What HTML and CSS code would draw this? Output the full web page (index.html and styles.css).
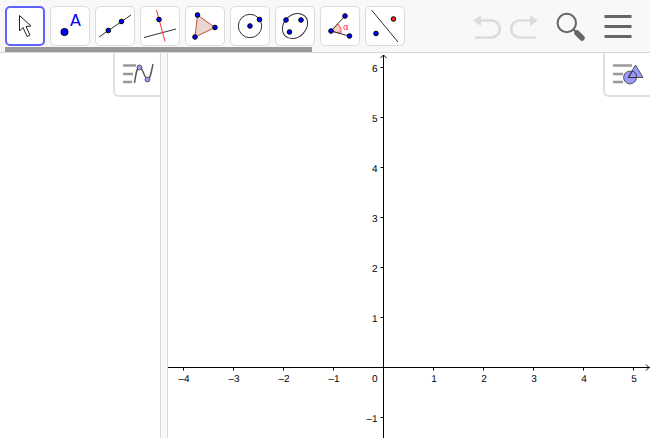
FILE: index.html
```html
<!DOCTYPE html>
<html lang="en">

<head>
    <meta charset="UTF-8">
    <meta name="viewport" content="width=device-width, initial-scale=1.0">
    <title>Graphing</title>
    <link rel="stylesheet" href="styles.css">
</head>

<body>

    <header class="toolbar">
        <div class="tools">
            <div class="tool-row">
                <button type="button" class="tool selected" aria-label="Move">
                    <svg viewBox="0 0 36 36">
                        <path d="M12.5 7.5 L12.5 23 L16 19.5 L20.2 28.5 L23 27 L19 18.5 L24 18 Z" fill="#fff" stroke="#222"/>
                    </svg>
                </button>
                <button type="button" class="tool" aria-label="Point">
                    <svg viewBox="0 0 36 36">
                        <circle class="dot" cx="12.5" cy="24" r="3.6"/>
                        <text class="letter" x="18" y="18">A</text>
                    </svg>
                </button>
                <button type="button" class="tool" aria-label="Line">
                    <svg viewBox="0 0 36 36">
                        <path class="line" d="M2 29 L34 7"/>
                        <circle class="dot" cx="11.3" cy="22.5" r="2.3"/>
                        <circle class="dot" cx="24.5" cy="13.5" r="2.3"/>
                    </svg>
                </button>
                <button type="button" class="tool" aria-label="Perpendicular line">
                    <svg viewBox="0 0 36 36">
                        <path class="line" d="M2 29.5 L34 21"/>
                        <path d="M14.5 2 L23 33.5" fill="none" stroke="#f33"/>
                        <circle class="dot" cx="17" cy="11.5" r="2.3"/>
                    </svg>
                </button>
                <button type="button" class="tool" aria-label="Polygon">
                    <svg viewBox="0 0 36 36">
                        <path class="area" d="M10.5 7 L28 19.5 L8 29 Z"/>
                        <circle class="dot" cx="10.5" cy="7" r="2.3"/>
                        <circle class="dot" cx="28" cy="19.5" r="2.3"/>
                        <circle class="dot" cx="8" cy="29" r="2.3"/>
                    </svg>
                </button>
                <button type="button" class="tool" aria-label="Circle">
                    <svg viewBox="0 0 36 36">
                        <circle class="line" cx="18" cy="18" r="11.7"/>
                        <circle class="dot" cx="18" cy="18" r="2.3"/>
                        <circle class="dot" cx="27.5" cy="11.5" r="2.3"/>
                    </svg>
                </button>
                <button type="button" class="tool" aria-label="Ellipse">
                    <svg viewBox="0 0 36 36">
                        <ellipse class="line" cx="18" cy="18" rx="14" ry="11" transform="rotate(-45 18 18)"/>
                        <circle class="dot" cx="9" cy="12" r="2.3"/>
                        <circle class="dot" cx="24" cy="12" r="2.3"/>
                        <circle class="dot" cx="12.5" cy="24" r="2.3"/>
                    </svg>
                </button>
                <button type="button" class="tool" aria-label="Angle">
                    <svg viewBox="0 0 36 36">
                        <path class="sector" d="M9 23 L16 16 A10 10 0 0 1 19 25.5 Z"/>
                        <path class="line" d="M23 8 L9 23 L27 28"/>
                        <text class="alpha" x="21" y="22">α</text>
                        <circle class="dot" cx="23" cy="8" r="2.3"/>
                        <circle class="dot" cx="9" cy="23" r="2.3"/>
                        <circle class="dot" cx="27.5" cy="28" r="2.3"/>
                    </svg>
                </button>
                <button type="button" class="tool" aria-label="Reflect">
                    <svg viewBox="0 0 36 36">
                        <path class="line" d="M4.5 2 L31 34"/>
                        <circle class="dot" cx="9" cy="25.5" r="2.3"/>
                        <circle class="dot red" cx="26.5" cy="11" r="2.3"/>
                    </svg>
                </button>
            </div>
            <div class="scroll-thumb"></div>
        </div>

        <div class="actions">
            <button type="button" class="action" aria-label="Undo" disabled>
                <svg width="28" height="28" viewBox="0 0 28 28">
                    <path d="M8 8.5 H18.5 A8.3 8.5 0 0 1 18.5 25.5 H2" fill="none" stroke="#dcdcdc" stroke-width="2.6"/>
                    <path d="M0 8.5 L8 3 V14 Z" fill="#dcdcdc"/>
                </svg>
            </button>
            <button type="button" class="action" aria-label="Redo" disabled>
                <svg width="28" height="28" viewBox="0 0 28 28">
                    <path d="M20 8.5 H9.5 A8.3 8.5 0 0 0 9.5 25.5 H26" fill="none" stroke="#dcdcdc" stroke-width="2.6"/>
                    <path d="M28 8.5 L20 3 V14 Z" fill="#dcdcdc"/>
                </svg>
            </button>
            <button type="button" class="action search" aria-label="Search">
                <svg width="30" height="30" viewBox="0 0 30 30">
                    <circle cx="10.8" cy="12" r="9.2" fill="none" stroke="#666" stroke-width="2"/>
                    <path d="M17 18 L20 21" stroke="#666" stroke-width="2"/>
                    <path d="M21 22 L26 27" stroke="#666" stroke-width="5.5" stroke-linecap="round"/>
                </svg>
            </button>
            <button type="button" class="action" aria-label="Menu">
                <svg width="28" height="28" viewBox="0 0 28 28">
                    <path d="M0.5 4.5 H27.5 M0.5 14.5 H27.5 M0.5 24.5 H27.5" stroke="#666" stroke-width="3"/>
                </svg>
            </button>
        </div>
    </header>

    <main class="views">
        <section class="algebra">
            <button type="button" class="stylebar" aria-label="Algebra style bar">
                <svg width="32" height="24" viewBox="0 0 32 24">
                    <path class="bars" d="M0 3.5 H13 M0 12 H10 M0 20 H9"/>
                    <path d="M11.5 21 C13 11 14 5 16.5 5 C20 5 21 17 25 17 C27 17 28 12 30 2" fill="none" stroke="#555" stroke-width="1.4"/>
                    <circle class="handle" cx="16.5" cy="5.5" r="2.4"/>
                    <circle class="handle" cx="24.5" cy="17.5" r="2.4"/>
                </svg>
            </button>
        </section>
        <div class="splitter"></div>
        <section class="graphics">
            <svg id="plane" role="img" aria-label="Coordinate plane"></svg>
            <button type="button" class="stylebar" aria-label="Graphics style bar">
                <svg width="32" height="24" viewBox="0 0 32 24">
                    <path class="bars" d="M0 3.5 H19 M0 12 H10 M0 20 H10"/>
                    <circle class="handle" cx="17" cy="15.5" r="6.4"/>
                    <path class="handle" d="M22.5 3 L30 15.5 H15 Z"/>
                    <path d="M19.5 9 A6.4 6.4 0 0 1 23.4 15.5 H15.5 L19.5 9" fill="none" stroke="#333"/>
                </svg>
            </button>
        </section>
    </main>

    <script>
        const plane = document.getElementById("plane");
        const unit = 50;
        const originX = 215.5;
        const originY = 314.5;

        function label(n) {
            return n < 0 ? "–" + (-n) : String(n);
        }

        function drawAxes() {
            const w = plane.clientWidth;
            const h = plane.clientHeight;
            const labelY = originY + 14;
            let lines = `M0 ${originY} H${w} M${originX} 2 V${h}`;
            let texts = `<text x="${originX - 6}" y="${labelY}" text-anchor="end">0</text>`;

            for (let n = Math.ceil(-originX / unit); originX + n * unit < w - 10; n++) {
                if (n === 0) continue;
                const x = originX + n * unit;
                lines += ` M${x} ${originY} v3`;
                texts += `<text x="${x + 0.5}" y="${labelY}" text-anchor="middle">${label(n)}</text>`;
            }
            for (let n = Math.floor(originY / unit); originY - n * unit < h - 10; n--) {
                if (n === 0) continue;
                const y = originY - n * unit;
                lines += ` M${originX} ${y} h-3`;
                texts += `<text x="${originX - 6}" y="${y + 4}" text-anchor="end">${label(n)}</text>`;
            }

            const arrows = `M${originX - 3} 5 L${originX} 2 l3 3 M${w - 4} ${originY - 3} l3 3 l-3 3`;
            plane.innerHTML = `<path class="axis" d="${lines}"/><path class="axis" d="${arrows}"/>${texts}`;
        }

        drawAxes();
        window.addEventListener("resize", drawAxes);
    </script>

</body>

</html>
```

FILE: styles.css
```css
* {
    box-sizing: border-box;
}

body {
    display: flex;
    flex-direction: column;
    height: 100vh;
    margin: 0;
    padding: 0 2px 2px 0;
    background-color: #fff;
    font-family: "Liberation Sans", Arial, sans-serif;
}

button {
    padding: 0;
    border: none;
    background: none;
    cursor: pointer;
}

svg {
    display: block;
}

.toolbar {
    display: flex;
    justify-content: space-between;
    flex-shrink: 0;
    height: 53px;
    background-color: #f8f8f8;
    border-bottom: 1px solid #d8d8d8;
}

.tools {
    padding: 6px 0 0 5px;
}

.tool-row {
    display: flex;
    gap: 5px;
}

.tool {
    width: 40px;
    height: 40px;
    background-color: #fff;
    border: 1px solid #dcdcdc;
    border-radius: 5px;
}

.tool.selected {
    border: 2px solid #6161ff;
}

.tool svg {
    width: 36px;
    height: 36px;
    margin: auto;
}

.scroll-thumb {
    width: 307px;
    height: 5px;
    margin-top: 1px;
    background-color: #999;
}

.dot {
    fill: #00f;
    stroke: #000;
}

.dot.red {
    fill: #f22;
}

.line {
    fill: none;
    stroke: #333;
}

.area {
    fill: #ebd5cf;
    stroke: #b9573a;
}

.sector {
    fill: #f2d2c8;
    stroke: #f44;
}

.letter {
    font: 16px "DejaVu Sans", sans-serif;
    fill: #00f;
}

.alpha {
    font: 9px "DejaVu Sans", sans-serif;
    fill: #f33;
}

.actions {
    display: flex;
    align-items: center;
    gap: 9px;
    padding-right: 18px;
}

.search {
    margin: 0 9px;
}

.views {
    display: flex;
    flex: 1;
    min-height: 0;
}

.algebra {
    display: flex;
    justify-content: flex-end;
    align-items: flex-start;
    width: 160px;
}

.splitter {
    width: 8px;
    background-color: #f8f8f8;
    border: 1px solid #d8d8d8;
    border-width: 0 1px;
}

.graphics {
    position: relative;
    flex: 1;
    min-width: 0;
}

#plane {
    width: 100%;
    height: 100%;
    font-size: 10px;
    text-rendering: geometricPrecision;
}

.axis {
    fill: none;
    stroke: #000;
}

.stylebar {
    width: 47px;
    height: 44px;
    padding-left: 8px;
    background-color: #fff;
    border: 2px solid #e0e0e0;
    border-width: 0 0 2px 2px;
    border-bottom-left-radius: 6px;
}

.graphics .stylebar {
    position: absolute;
    top: 0;
    right: 0;
}

.bars {
    stroke: #999;
    stroke-width: 2.5;
}

.handle {
    fill: #9999ff;
    stroke: #555;
}
```
